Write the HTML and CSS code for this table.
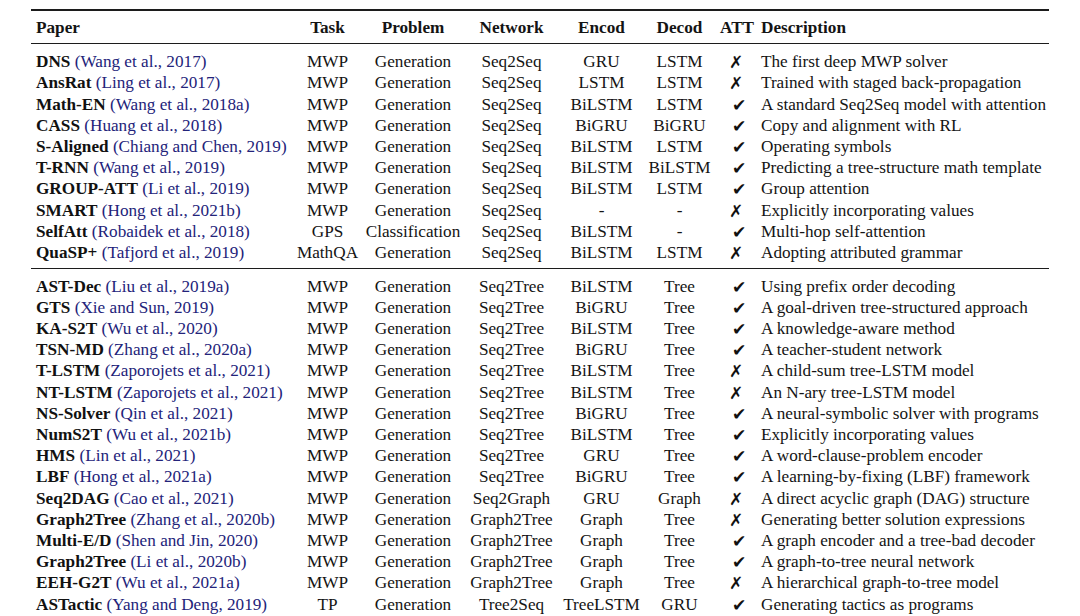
FILE: index.html
```html
<!DOCTYPE html>
<html lang="en">
<head>
<meta charset="utf-8">
<title>MWP models table</title>
<link rel="stylesheet" href="styles.css">
</head>
<body>
<div class="page">
<table class="tbl">
<colgroup>
<col class="c-paper"><col class="c-task"><col class="c-prob"><col class="c-net"><col class="c-enc"><col class="c-dec"><col class="c-att"><col class="c-desc">
</colgroup>
<thead>
<tr><th class="l">Paper</th><th>Task</th><th>Problem</th><th>Network</th><th>Encod</th><th>Decod</th><th class="att-h">ATT</th><th class="l desc">Description</th></tr>
</thead>
<tbody class="grp grp1">
<tr><td class="l"><b>DNS</b> <span class="cite">(Wang et al., 2017)</span></td><td>MWP</td><td>Generation</td><td>Seq2Seq</td><td>GRU</td><td>LSTM</td><td class="att"><span class="no">✗</span></td><td class="l desc">The first deep MWP solver</td></tr>
<tr><td class="l"><b>AnsRat</b> <span class="cite">(Ling et al., 2017)</span></td><td>MWP</td><td>Generation</td><td>Seq2Seq</td><td>LSTM</td><td>LSTM</td><td class="att"><span class="no">✗</span></td><td class="l desc">Trained with staged back-propagation</td></tr>
<tr><td class="l"><b>Math-EN</b> <span class="cite">(Wang et al., 2018a)</span></td><td>MWP</td><td>Generation</td><td>Seq2Seq</td><td>BiLSTM</td><td>LSTM</td><td class="att"><span class="yes">✔</span></td><td class="l desc">A standard Seq2Seq model with attention</td></tr>
<tr><td class="l"><b>CASS</b> <span class="cite">(Huang et al., 2018)</span></td><td>MWP</td><td>Generation</td><td>Seq2Seq</td><td>BiGRU</td><td>BiGRU</td><td class="att"><span class="yes">✔</span></td><td class="l desc">Copy and alignment with RL</td></tr>
<tr><td class="l"><b>S-Aligned</b> <span class="cite">(Chiang and Chen, 2019)</span></td><td>MWP</td><td>Generation</td><td>Seq2Seq</td><td>BiLSTM</td><td>LSTM</td><td class="att"><span class="yes">✔</span></td><td class="l desc">Operating symbols</td></tr>
<tr><td class="l"><b>T-RNN</b> <span class="cite">(Wang et al., 2019)</span></td><td>MWP</td><td>Generation</td><td>Seq2Seq</td><td>BiLSTM</td><td>BiLSTM</td><td class="att"><span class="yes">✔</span></td><td class="l desc">Predicting a tree-structure math template</td></tr>
<tr><td class="l"><b>GROUP-ATT</b> <span class="cite">(Li et al., 2019)</span></td><td>MWP</td><td>Generation</td><td>Seq2Seq</td><td>BiLSTM</td><td>LSTM</td><td class="att"><span class="yes">✔</span></td><td class="l desc">Group attention</td></tr>
<tr><td class="l"><b>SMART</b> <span class="cite">(Hong et al., 2021b)</span></td><td>MWP</td><td>Generation</td><td>Seq2Seq</td><td>-</td><td>-</td><td class="att"><span class="no">✗</span></td><td class="l desc">Explicitly incorporating values</td></tr>
<tr><td class="l"><b>SelfAtt</b> <span class="cite">(Robaidek et al., 2018)</span></td><td>GPS</td><td>Classification</td><td>Seq2Seq</td><td>BiLSTM</td><td>-</td><td class="att"><span class="yes">✔</span></td><td class="l desc">Multi-hop self-attention</td></tr>
<tr><td class="l"><b>QuaSP+</b> <span class="cite">(Tafjord et al., 2019)</span></td><td>MathQA</td><td>Generation</td><td>Seq2Seq</td><td>BiLSTM</td><td>LSTM</td><td class="att"><span class="no">✗</span></td><td class="l desc">Adopting attributed grammar</td></tr>
</tbody>
<tbody class="grp grp2">
<tr><td class="l"><b>AST-Dec</b> <span class="cite">(Liu et al., 2019a)</span></td><td>MWP</td><td>Generation</td><td>Seq2Tree</td><td>BiLSTM</td><td>Tree</td><td class="att"><span class="yes">✔</span></td><td class="l desc">Using prefix order decoding</td></tr>
<tr><td class="l"><b>GTS</b> <span class="cite">(Xie and Sun, 2019)</span></td><td>MWP</td><td>Generation</td><td>Seq2Tree</td><td>BiGRU</td><td>Tree</td><td class="att"><span class="yes">✔</span></td><td class="l desc">A goal-driven tree-structured approach</td></tr>
<tr><td class="l"><b>KA-S2T</b> <span class="cite">(Wu et al., 2020)</span></td><td>MWP</td><td>Generation</td><td>Seq2Tree</td><td>BiLSTM</td><td>Tree</td><td class="att"><span class="yes">✔</span></td><td class="l desc">A knowledge-aware method</td></tr>
<tr><td class="l"><b>TSN-MD</b> <span class="cite">(Zhang et al., 2020a)</span></td><td>MWP</td><td>Generation</td><td>Seq2Tree</td><td>BiGRU</td><td>Tree</td><td class="att"><span class="yes">✔</span></td><td class="l desc">A teacher-student network</td></tr>
<tr><td class="l"><b>T-LSTM</b> <span class="cite">(Zaporojets et al., 2021)</span></td><td>MWP</td><td>Generation</td><td>Seq2Tree</td><td>BiLSTM</td><td>Tree</td><td class="att"><span class="no">✗</span></td><td class="l desc">A child-sum tree-LSTM model</td></tr>
<tr><td class="l"><b>NT-LSTM</b> <span class="cite">(Zaporojets et al., 2021)</span></td><td>MWP</td><td>Generation</td><td>Seq2Tree</td><td>BiLSTM</td><td>Tree</td><td class="att"><span class="no">✗</span></td><td class="l desc">An N-ary tree-LSTM model</td></tr>
<tr><td class="l"><b>NS-Solver</b> <span class="cite">(Qin et al., 2021)</span></td><td>MWP</td><td>Generation</td><td>Seq2Tree</td><td>BiGRU</td><td>Tree</td><td class="att"><span class="yes">✔</span></td><td class="l desc">A neural-symbolic solver with programs</td></tr>
<tr><td class="l"><b>NumS2T</b> <span class="cite">(Wu et al., 2021b)</span></td><td>MWP</td><td>Generation</td><td>Seq2Tree</td><td>BiLSTM</td><td>Tree</td><td class="att"><span class="yes">✔</span></td><td class="l desc">Explicitly incorporating values</td></tr>
<tr><td class="l"><b>HMS</b> <span class="cite">(Lin et al., 2021)</span></td><td>MWP</td><td>Generation</td><td>Seq2Tree</td><td>GRU</td><td>Tree</td><td class="att"><span class="yes">✔</span></td><td class="l desc">A word-clause-problem encoder</td></tr>
<tr><td class="l"><b>LBF</b> <span class="cite">(Hong et al., 2021a)</span></td><td>MWP</td><td>Generation</td><td>Seq2Tree</td><td>BiGRU</td><td>Tree</td><td class="att"><span class="yes">✔</span></td><td class="l desc">A learning-by-fixing (LBF) framework</td></tr>
<tr><td class="l"><b>Seq2DAG</b> <span class="cite">(Cao et al., 2021)</span></td><td>MWP</td><td>Generation</td><td>Seq2Graph</td><td>GRU</td><td>Graph</td><td class="att"><span class="no">✗</span></td><td class="l desc">A direct acyclic graph (DAG) structure</td></tr>
<tr><td class="l"><b>Graph2Tree</b> <span class="cite">(Zhang et al., 2020b)</span></td><td>MWP</td><td>Generation</td><td>Graph2Tree</td><td>Graph</td><td>Tree</td><td class="att"><span class="no">✗</span></td><td class="l desc">Generating better solution expressions</td></tr>
<tr><td class="l"><b>Multi-E/D</b> <span class="cite">(Shen and Jin, 2020)</span></td><td>MWP</td><td>Generation</td><td>Graph2Tree</td><td>Graph</td><td>Tree</td><td class="att"><span class="yes">✔</span></td><td class="l desc">A graph encoder and a tree-bad decoder</td></tr>
<tr><td class="l"><b>Graph2Tree</b> <span class="cite">(Li et al., 2020b)</span></td><td>MWP</td><td>Generation</td><td>Graph2Tree</td><td>Graph</td><td>Tree</td><td class="att"><span class="yes">✔</span></td><td class="l desc">A graph-to-tree neural network</td></tr>
<tr><td class="l"><b>EEH-G2T</b> <span class="cite">(Wu et al., 2021a)</span></td><td>MWP</td><td>Generation</td><td>Graph2Tree</td><td>Graph</td><td>Tree</td><td class="att"><span class="no">✗</span></td><td class="l desc">A hierarchical graph-to-tree model</td></tr>
<tr><td class="l"><b>ASTactic</b> <span class="cite">(Yang and Deng, 2019)</span></td><td>TP</td><td>Generation</td><td>Tree2Seq</td><td>TreeLSTM</td><td>GRU</td><td class="att"><span class="yes">✔</span></td><td class="l desc">Generating tactics as programs</td></tr>
</tbody>
</table>
</div>
</body>
</html>
```
FILE: styles.css
```css
html, body {
  margin: 0;
  padding: 0;
  background: #ffffff;
  overflow: hidden;
}

.page {
  padding: 9px 0 0 31px;
  font-family: "Liberation Serif", "Times New Roman", serif;
  font-size: 17.2px;
  color: #141414;
}

.tbl {
  border-collapse: separate;
  border-spacing: 0;
  table-layout: fixed;
  width: 1018px;
}

.c-paper { width: 261px; }
.c-task  { width: 71px; }
.c-prob  { width: 100px; }
.c-net   { width: 97px; }
.c-enc   { width: 83px; }
.c-dec   { width: 73px; }
.c-att   { width: 44px; }
.c-desc  { width: 289px; }

.tbl th,
.tbl td {
  padding: 0;
  line-height: 21.2px;
  text-align: center;
  white-space: nowrap;
  vertical-align: top;
}

.tbl th {
  font-weight: bold;
  border-top: 2px solid #1c1c1c;
  border-bottom: 1px solid #1c1c1c;
  padding-top: 5.6px;
  padding-bottom: 5px;
}

.tbl .l { text-align: left; padding-left: 5px; }
.tbl .desc { padding-left: 1px; }
.tbl .att-h { text-align: left; padding-left: 4px; }

.tbl b { font-weight: bold; color: #111; }

.cite { color: #23237a; }

.grp tr:first-child td { padding-top: 7.4px; }
.grp1 tr:last-child td {
  padding-bottom: 5px;
  border-bottom: 1px solid #1c1c1c;
}
.grp2 tr:first-child td { padding-top: 6.4px; }

.tbl td.att {
  font-family: "DejaVu Sans", sans-serif;
  font-size: 17px;
  line-height: 21.2px;
  color: #111;
  overflow: hidden;
}
.att .yes { position: relative; left: 1px; top: 1px; }
.att .no { position: relative; left: -2px; top: 1px; }
```
